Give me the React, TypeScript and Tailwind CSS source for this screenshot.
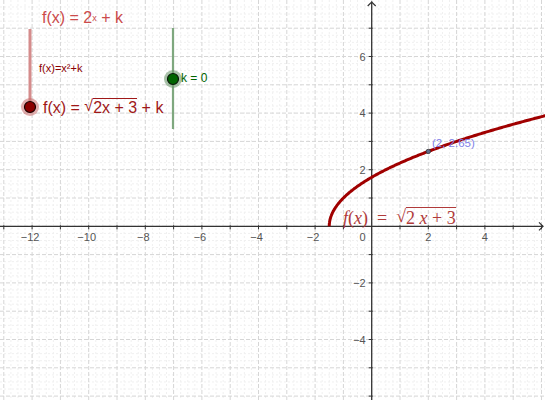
import React from "react";

const W = 545;
const H = 400;
const OX = 371.7;
const OY = 226.3;
const U = 28.3;

const sx = (x: number) => OX + x * U;
const sy = (y: number) => OY - y * U;

function Graph() {
  const minor: React.ReactNode[] = [];
  const major: React.ReactNode[] = [];
  for (let i = -60; i <= 30; i++) {
    const x = sx(i / 4);
    if (x < 0 || x > W) continue;
    if (i % 4 === 0) {
      major.push(<line key={"vx" + i} x1={x} y1={0} x2={x} y2={H} stroke="#d6d6d6" strokeDasharray="4 2" strokeWidth={1} />);
    } else {
      minor.push(<line key={"mx" + i} x1={x} y1={0} x2={x} y2={H} stroke="#f0f0f0" strokeDasharray="2 2" strokeWidth={1} />);
    }
  }
  for (let i = -40; i <= 40; i++) {
    const y = sy(i / 4);
    if (y < 0 || y > H) continue;
    if (i % 4 === 0) {
      major.push(<line key={"hy" + i} x1={0} y1={y} x2={W} y2={y} stroke="#d6d6d6" strokeDasharray="4 2" strokeWidth={1} />);
    } else {
      minor.push(<line key={"my" + i} x1={0} y1={y} x2={W} y2={y} stroke="#f0f0f0" strokeDasharray="2 2" strokeWidth={1} />);
    }
  }

  const ticks: React.ReactNode[] = [];
  const labels: React.ReactNode[] = [];
  for (let i = -13; i <= 6; i++) {
    const x = sx(i);
    if (i === 0) continue;
    ticks.push(<line key={"tx" + i} x1={x} y1={OY - 1} x2={x} y2={OY + 3} stroke="#333" strokeWidth={1} />);
    if (i % 2 === 0 && i <= 4) {
      labels.push(
        <text key={"lx" + i} x={x - (i < 0 ? 2 : 0)} y={OY + 15} fontSize={11} fill="#555" textAnchor="middle" fontFamily="'Liberation Sans', Arial, sans-serif">
          {i < 0 ? "\u2212" + -i : String(i)}
        </text>
      );
    }
  }
  for (let i = -6; i <= 7; i++) {
    if (i === 0) continue;
    const y = sy(i);
    ticks.push(<line key={"ty" + i} x1={OX - 3} y1={y} x2={OX + 1} y2={y} stroke="#333" strokeWidth={1} />);
    if (i % 2 === 0 && i >= -4 && i <= 6) {
      labels.push(
        <text key={"ly" + i} x={OX - 6} y={y + 4} fontSize={11} fill="#555" textAnchor="end" fontFamily="'Liberation Sans', Arial, sans-serif">
          {i < 0 ? "\u2212" + -i : String(i)}
        </text>
      );
    }
  }
  labels.push(
    <text key="l0" x={OX - 6} y={OY + 15} fontSize={11} fill="#555" textAnchor="end" fontFamily="'Liberation Sans', Arial, sans-serif">
      0
    </text>
  );

  const pts: string[] = [];
  const x0 = -1.5;
  for (let k = 0; k <= 400; k++) {
    const t = k / 400;
    const x = x0 + (t * t) * (6.2 - x0);
    const y = Math.sqrt(Math.max(0, 2 * x + 3));
    pts.push(`${sx(x).toFixed(2)},${sy(y).toFixed(2)}`);
  }

  return (
    <svg width={W} height={H} viewBox={`0 0 ${W} ${H}`} className="absolute left-0 top-0">
      {minor}
      {major}
      <line x1={0} y1={OY} x2={W - 2} y2={OY} stroke="#333" strokeWidth={1.3} />
      <polyline points={`${W - 6},${OY - 4} ${W - 2},${OY} ${W - 6},${OY + 4}`} fill="none" stroke="#333" strokeWidth={1.2} />
      <line x1={OX} y1={H} x2={OX} y2={1.5} stroke="#333" strokeWidth={1.3} />
      <polyline points={`${OX - 4},${6} ${OX},${2} ${OX + 4},${6}`} fill="none" stroke="#333" strokeWidth={1.2} />
      {ticks}
      {labels}
      <polyline points={pts.join(" ")} fill="none" stroke="#a00000" strokeWidth={3} strokeLinejoin="round" />
      <circle cx={sx(2)} cy={sy(Math.sqrt(7))} r={2.2} fill="#5f6a8a" stroke="#333" strokeWidth={0.8} />

      {/* red slider */}
      <line x1={30} y1={29} x2={30} y2={107} stroke="#d58c8c" strokeWidth={3} />
      <circle cx={30} cy={107} r={9} fill="#c96b6b" fillOpacity={0.55} />
      <circle cx={30} cy={107} r={5.5} fill="#8b0000" stroke="#1a0000" strokeWidth={1.2} />

      {/* green slider */}
      <line x1={173} y1={28} x2={173} y2={129} stroke="#7fa87f" strokeWidth={2.2} />
      <circle cx={173} cy={79} r={9} fill="#6f9a6f" fillOpacity={0.6} />
      <circle cx={173} cy={79} r={5.5} fill="#006400" stroke="#0a1a0a" strokeWidth={1.2} />
    </svg>
  );
}

function Sqrt({ children, bar }: { children: React.ReactNode; bar: string }) {
  return (
    <span className="inline-flex items-start">
      <span className="leading-none">√</span>
      <span className="border-t leading-none pt-[1px]" style={{ borderColor: bar }}>
        {children}
      </span>
    </span>
  );
}

export default function App() {
  return (
    <div className="relative w-[545px] h-[400px] bg-white overflow-hidden font-['Liberation_Sans',Arial,sans-serif]">
      <Graph />

      <div className="absolute left-[42px] top-[10px] text-[16px] leading-none text-[#cc4b4b] whitespace-nowrap">
        f(x) = 2<sup className="text-[9px] relative -top-[2px]">x</sup> + k
      </div>

      <div className="absolute left-[39px] top-[63px] text-[11px] leading-none text-[#8b0000] whitespace-nowrap">
        f(x)=x²+k
      </div>

      <div className="absolute left-[43px] top-[98px] text-[16px] leading-none text-[#a01818] whitespace-nowrap flex items-end">
        <span>f(x) =&nbsp;</span>
        <Sqrt bar="#a01818">2x + 3</Sqrt>
        <span>&nbsp;+ k</span>
      </div>

      <div className="absolute left-[181px] top-[72px] text-[12px] leading-none text-[#006400] whitespace-nowrap">
        k = 0
      </div>

      <div className="absolute left-[432px] top-[138px] text-[11.5px] leading-none text-[#7f7fe8] whitespace-nowrap">
        (2, 2.65)
      </div>

      <div className="absolute left-[343px] top-[207px] text-[18px] leading-none text-[#b03a3a] whitespace-nowrap font-['Liberation_Serif','Times_New_Roman',serif] flex items-end">
        <span className="italic">f</span>
        <span>(</span>
        <span className="italic">x</span>
        <span>)&nbsp;&nbsp;=&nbsp;&nbsp;</span>
        <Sqrt bar="#b03a3a">
          <span>2&nbsp;</span>
          <span className="italic">x</span>
          <span>&nbsp;+ 3</span>
        </Sqrt>
      </div>
    </div>
  );
}
